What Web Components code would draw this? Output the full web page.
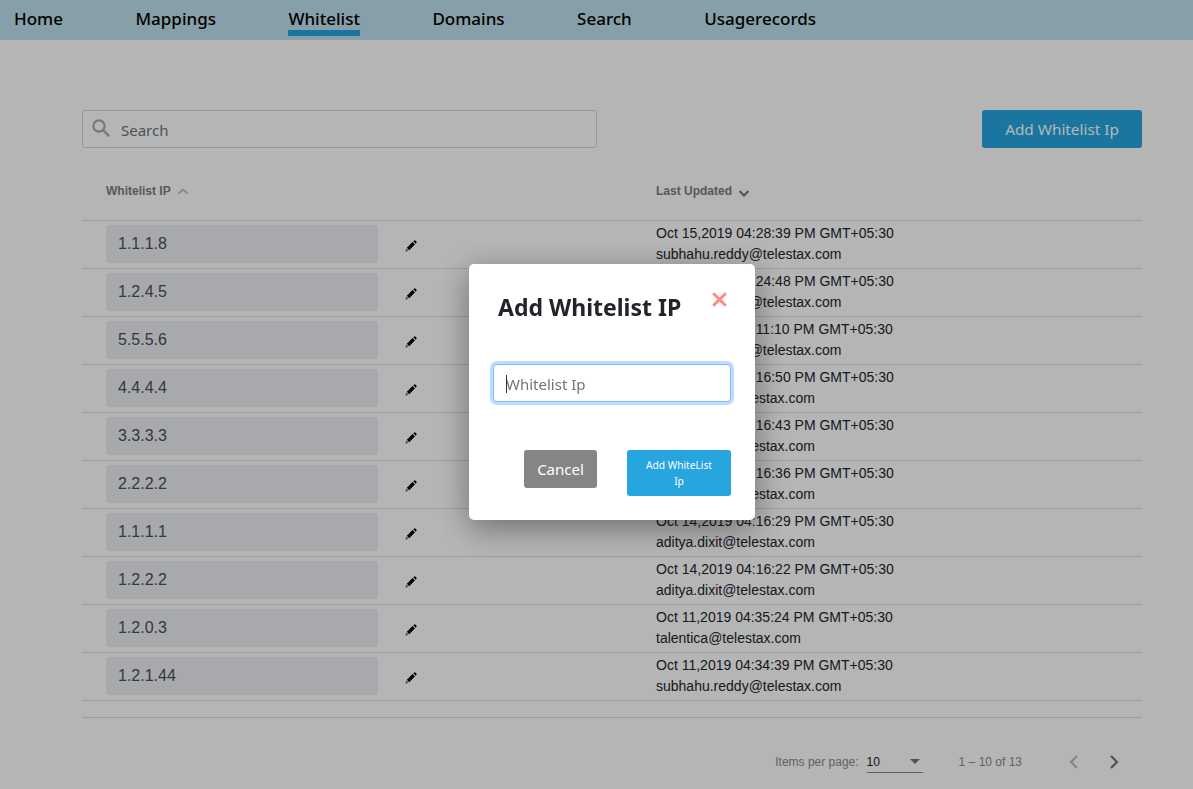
<!DOCTYPE html>
<html lang="en">
<head>
<meta charset="utf-8">
<title>Whitelist</title>
<style>
  html, body { margin: 0; height: 100%; overflow: hidden; background: #fff; font-family: "Liberation Sans", Arial, sans-serif; }
</style>
</head>
<body>
<app-nav></app-nav>
<main-page>
  <search-box slot="search"></search-box>
  <whitelist-table slot="table">
    <whitelist-row ip="1.1.1.8" date="Oct 15,2019 04:28:39 PM GMT+05:30" by="subhahu.reddy@telestax.com"></whitelist-row>
    <whitelist-row ip="1.2.4.5" date="Oct 15,2019 04:24:48 PM GMT+05:30" by="subhahu.reddy@telestax.com"></whitelist-row>
    <whitelist-row ip="5.5.5.6" date="Oct 15,2019 04:11:10 PM GMT+05:30" by="subhahu.reddy@telestax.com"></whitelist-row>
    <whitelist-row ip="4.4.4.4" date="Oct 14,2019 04:16:50 PM GMT+05:30" by="aditya.dixit@telestax.com"></whitelist-row>
    <whitelist-row ip="3.3.3.3" date="Oct 14,2019 04:16:43 PM GMT+05:30" by="aditya.dixit@telestax.com"></whitelist-row>
    <whitelist-row ip="2.2.2.2" date="Oct 14,2019 04:16:36 PM GMT+05:30" by="aditya.dixit@telestax.com"></whitelist-row>
    <whitelist-row ip="1.1.1.1" date="Oct 14,2019 04:16:29 PM GMT+05:30" by="aditya.dixit@telestax.com"></whitelist-row>
    <whitelist-row ip="1.2.2.2" date="Oct 14,2019 04:16:22 PM GMT+05:30" by="aditya.dixit@telestax.com"></whitelist-row>
    <whitelist-row ip="1.2.0.3" date="Oct 11,2019 04:35:24 PM GMT+05:30" by="talentica@telestax.com"></whitelist-row>
    <whitelist-row ip="1.2.1.44" date="Oct 11,2019 04:34:39 PM GMT+05:30" by="subhahu.reddy@telestax.com"></whitelist-row>
  </whitelist-table>
  <table-pager slot="pager"></table-pager>
</main-page>
<add-modal></add-modal>

<script>
class AppNav extends HTMLElement {
  constructor() {
    super();
    this.attachShadow({ mode: "open" });
    this.shadowRoot.innerHTML = `
      <style>
        :host {
          display: flex;
          height: 40px;
          padding-left: 14px;
          gap: 72.5px;
          background: #bfe1ed;
          font: 500 17px "Noto Sans", sans-serif;
          color: #000;
        }
        a {
          display: block;
          height: 30px;
          line-height: 37px;
          color: inherit;
          text-decoration: none;
        }
        .active {
          box-sizing: content-box;
          border-bottom: 6px solid #26a6e1;
        }
      </style>
      <a>Home</a>
      <a>Mappings</a>
      <a class="active">Whitelist</a>
      <a>Domains</a>
      <a>Search</a>
      <a>Usagerecords</a>
    `;
  }
}

class MainPage extends HTMLElement {
  constructor() {
    super();
    this.attachShadow({ mode: "open" });
    this.shadowRoot.innerHTML = `
      <style>
        :host {
          display: block;
          padding: 70px 51px 0 82px;
        }
        .top {
          display: flex;
          justify-content: space-between;
        }
        button {
          width: 160px;
          height: 38px;
          border: 0;
          border-radius: 3px;
          background: #26a6e1;
          color: #fff;
          font: 15.3px "Noto Sans", sans-serif;
        }
      </style>
      <div class="top">
        <slot name="search"></slot>
        <button>Add Whitelist Ip</button>
      </div>
      <slot name="table"></slot>
      <slot name="pager"></slot>
    `;
  }
}

class SearchBox extends HTMLElement {
  constructor() {
    super();
    this.attachShadow({ mode: "open" });
    this.shadowRoot.innerHTML = `
      <style>
        :host {
          display: flex;
          align-items: center;
          box-sizing: border-box;
          width: 515px;
          height: 38px;
          padding-left: 9px;
          gap: 11px;
          border: 1px solid #d4d6da;
          border-radius: 3px;
          background: #fff;
        }
        svg { flex: none; margin-top: -3px; }
        span {
          font: 15px "Noto Sans", sans-serif;
          color: #6c757d;
          padding-top: 1px;
        }
      </style>
      <svg width="18" height="18" viewBox="0 0 18 18" fill="none" stroke="#a8a8a8" stroke-width="2.2">
        <circle cx="7" cy="7" r="5.6"/>
        <path d="M11 11l5.6 5.6" stroke-linecap="round"/>
      </svg>
      <span>Search</span>
    `;
  }
}

class WhitelistTable extends HTMLElement {
  constructor() {
    super();
    this.attachShadow({ mode: "open" });
    this.shadowRoot.innerHTML = `
      <style>
        :host {
          display: block;
          font-family: "Liberation Sans", Arial, sans-serif;
        }
        .head {
          display: grid;
          grid-template-columns: 550px 1fr;
          height: 73px;
          box-sizing: border-box;
          padding: 36px 0 0 24px;
          border-bottom: 1px solid #dcdcdc;
          font-size: 12px;
          font-weight: bold;
          color: #7d7d7d;
        }
        .head div { display: flex; align-items: flex-start; gap: 6px; height: 14px; line-height: 14px; }
        .head svg { flex: none; }
        .tail { height: 16px; border-bottom: 1px solid #dcdcdc; }
      </style>
      <div class="head">
        <div>Whitelist IP
          <svg width="12" height="14" viewBox="0 0 12 14" fill="none" stroke="#c4c4c4" stroke-width="2"><path d="M1.5 9.5L6 5.5l4.500 4"/></svg>
        </div>
        <div>Last Updated
          <svg width="12" height="16" viewBox="0 0 12 16" fill="none" stroke="#757575" stroke-width="2.200"><path d="M1.500 7L6 11.500 10.500 7"/></svg>
        </div>
      </div>
      <slot></slot>
      <div class="tail"></div>
    `;
  }
}

class WhitelistRow extends HTMLElement {
  constructor() {
    super();
    this.attachShadow({ mode: "open" });
    this.shadowRoot.innerHTML = `
      <style>
        :host {
          display: grid;
          grid-template-columns: 272px 278px 1fr;
          box-sizing: border-box;
          height: 48px;
          padding-left: 24px;
          border-bottom: 1px solid #dcdcdc;
          font-family: "Liberation Sans", Arial, sans-serif;
          color: #212529;
        }
        .ip {
          box-sizing: border-box;
          height: 38px;
          margin-top: 4px;
          padding: 0 12px;
          border-radius: 4px;
          background: #eceef2;
          color: #495057;
          font-size: 16px;
          line-height: 38px;
        }
        .edit { padding: 19px 0 0 27px; }
        .info { font-size: 14px; line-height: 21px; padding-top: 2px; }
      </style>
      <div class="ip"></div>
      <div class="edit">
        <svg width="12" height="12" viewBox="0 0 13 13" style="display:block">
          <path d="M.4 12.600L1.300 9.300 3.700 11.700z" fill="#6b5a45"/>
          <path d="M2 8.500L8.200 2.300 10.700 4.800 4.500 11z" fill="#000"/>
          <path d="M9 1.500L10 .5c.4-.3.900-.3 1.200 0l1.300 1.300c.3.300.3.800 0 1.200l-1 1z" fill="#111"/>
        </svg>
      </div>
      <div class="info"><div class="date"></div><div class="by"></div></div>
    `;
    this.shadowRoot.querySelector(".ip").textContent = this.getAttribute("ip");
    this.shadowRoot.querySelector(".date").textContent = this.getAttribute("date");
    this.shadowRoot.querySelector(".by").textContent = this.getAttribute("by");
  }
}

class TablePager extends HTMLElement {
  constructor() {
    super();
    this.attachShadow({ mode: "open" });
    this.shadowRoot.innerHTML = `
      <style>
        :host {
          display: flex;
          justify-content: flex-end;
          align-items: center;
          height: 30px;
          margin-top: 29px;
          padding-right: 23px;
          font: 12px "Liberation Sans", Arial, sans-serif;
          color: #8a8a8a;
        }
        .select {
          display: flex;
          justify-content: space-between;
          align-items: center;
          box-sizing: border-box;
          width: 56px;
          height: 22px;
          margin: 0 36px 0 9px;
          border-bottom: 1px solid #8a8a8a;
          color: #212121;
        }
        .select i {
          margin-right: 3px;
          border: 5.500px solid transparent;
          border-top: 5.500px solid #757575;
          border-bottom: 0;
        }
        .items { margin-right: -1px; }
        .range { margin-right: 47px; }
        svg { display: block; }
      </style>
      <span class="items">Items per page:</span>
      <div class="select"><span>10</span><i></i></div>
      <span class="range">1 – 10 of 13</span>
      <svg width="9" height="14" viewBox="0 0 9 14" fill="none" stroke="#bdbdbd" stroke-width="2.200" style="margin-right:32px"><path d="M8 1L2 7l6 6"/></svg>
      <svg width="9" height="14" viewBox="0 0 9 14" fill="none" stroke="#757575" stroke-width="2.200"><path d="M1 1l6 6-6 6"/></svg>
    `;
  }
}

class AddModal extends HTMLElement {
  constructor() {
    super();
    this.attachShadow({ mode: "open" });
    this.shadowRoot.innerHTML = `
      <style>
        :host {
          position: fixed;
          inset: 0;
          display: block;
          background: rgba(0, 0, 0, 0.29);
        }
        .dialog {
          position: absolute;
          left: 469px;
          top: 264px;
          box-sizing: border-box;
          width: 286px;
          height: 256px;
          padding: 24px 24px 0 24px;
          border-radius: 5px;
          background: #fff;
          box-shadow: 0 8px 32px rgba(0, 0, 0, 0.4);
          font-family: "Noto Sans", sans-serif;
        }
        .title {
          display: flex;
          justify-content: space-between;
          align-items: flex-start;
          padding-left: 5px;
        }
        h2 {
          margin: -1px 0 1px;
          font-size: 23px;
          font-weight: 700;
          line-height: 40px;
          color: #212529;
        }
        .close { margin: 4px 4px 0 0; display: block; flex: none; }
        .field {
          position: relative;
          margin: 36px 0 0 0;
        }
        input {
          display: block;
          box-sizing: border-box;
          width: 238px;
          height: 38px;
          padding: 1px 12px 0;
          border: 1px solid #80bdff;
          border-radius: 4px;
          box-shadow: 0 0 0 3px rgba(0, 123, 255, 0.25);
          outline: 0;
          font: 15px "Noto Sans", sans-serif;
          color: #495057;
        }
        input::placeholder { color: #6c757d; opacity: 1; }
        .caret {
          position: absolute;
          left: 13px;
          top: 11px;
          width: 1px;
          height: 18px;
          background: #333;
        }
        .actions {
          display: flex;
          justify-content: flex-end;
          align-items: flex-start;
          gap: 30px;
          margin-top: 48px;
        }
        button {
          border: 0;
          border-radius: 3px;
          color: #fff;
          font-family: inherit;
          padding: 0;
        }
        .cancel {
          width: 73px;
          height: 38px;
          background: #858585;
          font-size: 15px;
        }
        .add {
          width: 104px;
          height: 46px;
          background: #26a5de;
          font-size: 10.2px;
          line-height: 16px;
          padding: 0 16px;
        }
      </style>
      <div class="dialog">
        <div class="title">
          <h2>Add Whitelist IP</h2>
          <svg class="close" width="15" height="15" viewBox="0 0 15 15" stroke="#ff8a8a" stroke-width="3">
            <path d="M1.200 1.200l12.600 12.600M13.800 1.200L1.200 13.800"/>
          </svg>
        </div>
        <div class="field">
          <input placeholder="Whitelist Ip">
          <span class="caret"></span>
        </div>
        <div class="actions">
          <button class="cancel">Cancel</button>
          <button class="add">Add WhiteList Ip</button>
        </div>
      </div>
    `;
  }
}

customElements.define("app-nav", AppNav);
customElements.define("main-page", MainPage);
customElements.define("search-box", SearchBox);
customElements.define("whitelist-table", WhitelistTable);
customElements.define("whitelist-row", WhitelistRow);
customElements.define("table-pager", TablePager);
customElements.define("add-modal", AddModal);
</script>
</body>
</html>
